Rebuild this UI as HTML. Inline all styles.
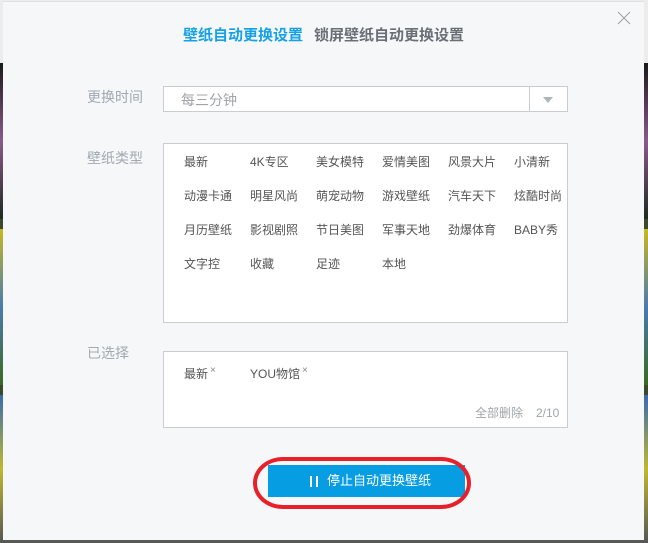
<!DOCTYPE html>
<html><head><meta charset="utf-8"><style>
*{margin:0;padding:0;box-sizing:border-box}
body{width:648px;height:543px;overflow:hidden;position:relative;background:#3a4a2a;font-family:"Liberation Sans","Noto Sans CJK SC",sans-serif}
.bg{position:absolute}
.dlg{position:absolute;left:3px;top:1px;width:641px;height:539px;background:#f5f7f9}
.t{position:absolute;font-size:15px;font-weight:bold;top:23px;white-space:nowrap}
.lbl{position:absolute;left:84px;font-size:14px;color:#a3a9b0}
.box{position:absolute;left:160px;width:405px;background:#fff;border:1px solid #c9ccd0}
.it{position:absolute;font-size:12px;color:#555;white-space:nowrap;line-height:14px}
.x{font-size:10px;color:#888;position:relative;top:-5px;margin-left:2px}
</style></head><body>
<div class="bg" style="left:0;top:0;width:648px;height:63px;background:#ececec"></div>
<div class="bg" style="left:0;top:63px;width:648px;height:156px;background:linear-gradient(#1a1a1a,#8a5a8a,#202a20)"></div>
<div class="bg" style="left:0;top:229px;width:648px;height:156px;background:linear-gradient(#c8b820,#4a7ab0,#3a6a20)"></div>
<div class="bg" style="left:0;top:395px;width:648px;height:148px;background:linear-gradient(#3a6ab0,#c0b830,#555)"></div>
<div class="dlg">
<div style="position:absolute;left:0;top:0;width:641px;height:1px;background:#e0e2e4"></div>
<svg style="position:absolute;left:614px;top:10px" width="14" height="14"><path d="M1 1L13 13M13 1L1 13" stroke="#9aa0a6" stroke-width="1"/></svg>
<div class="t" style="left:180px;color:#14a1e6">壁纸自动更换设置</div>
<div class="t" style="left:311px;color:#6a6f75">锁屏壁纸自动更换设置</div>

<div class="lbl" style="top:86px">更换时间</div>
<div class="box" style="top:85px;height:26px">
<div style="position:absolute;left:17px;top:3px;font-size:14px;color:#a0a4a8">每三分钟</div>
<div style="position:absolute;left:365px;top:0;width:1px;height:24px;background:#c9ccd0"></div>
<div style="position:absolute;left:379px;top:10px;width:0;height:0;border-left:5px solid transparent;border-right:5px solid transparent;border-top:6px solid #b0b4b8"></div>
</div>

<div class="lbl" style="top:147px">壁纸类型</div>
<div class="box" style="top:142px;height:180px">
<div class="it" style="left:20px;top:11px">最新</div><div class="it" style="left:86px;top:11px">4K专区</div><div class="it" style="left:152px;top:11px">美女模特</div><div class="it" style="left:218px;top:11px">爱情美图</div><div class="it" style="left:284px;top:11px">风景大片</div><div class="it" style="left:350px;top:11px">小清新</div>
<div class="it" style="left:20px;top:45px">动漫卡通</div><div class="it" style="left:86px;top:45px">明星风尚</div><div class="it" style="left:152px;top:45px">萌宠动物</div><div class="it" style="left:218px;top:45px">游戏壁纸</div><div class="it" style="left:284px;top:45px">汽车天下</div><div class="it" style="left:350px;top:45px">炫酷时尚</div>
<div class="it" style="left:20px;top:79px">月历壁纸</div><div class="it" style="left:86px;top:79px">影视剧照</div><div class="it" style="left:152px;top:79px">节日美图</div><div class="it" style="left:218px;top:79px">军事天地</div><div class="it" style="left:284px;top:79px">劲爆体育</div><div class="it" style="left:350px;top:79px">BABY秀</div>
<div class="it" style="left:20px;top:113px">文字控</div><div class="it" style="left:86px;top:113px">收藏</div><div class="it" style="left:152px;top:113px">足迹</div><div class="it" style="left:218px;top:113px">本地</div>
</div>

<div class="lbl" style="top:342px">已选择</div>
<div class="box" style="top:350px;height:77px">
<div class="it" style="left:20px;top:15px">最新<span class="x">×</span></div>
<div class="it" style="left:86px;top:15px">YOU物馆<span class="x">×</span></div>
<div class="it" style="left:311px;top:54px;color:#a0a4a8">全部删除</div>
<div class="it" style="left:372px;top:54px;color:#a0a4a8">2/10</div>
</div>

<div style="position:absolute;left:265px;top:464px;width:197px;height:32px;background:#069de2;color:#fff;font-size:13px;line-height:32px">
<span style="position:absolute;left:42px;top:11px;width:2px;height:11px;background:#fff"></span>
<span style="position:absolute;left:48px;top:11px;width:2px;height:11px;background:#fff"></span>
<span style="position:absolute;left:59px">停止自动更换壁纸</span>
</div>
<div style="position:absolute;left:250px;top:456px;width:218px;height:52px;border:4px solid #e8202a;border-radius:30px/26px"></div>
</div>
</body></html>
